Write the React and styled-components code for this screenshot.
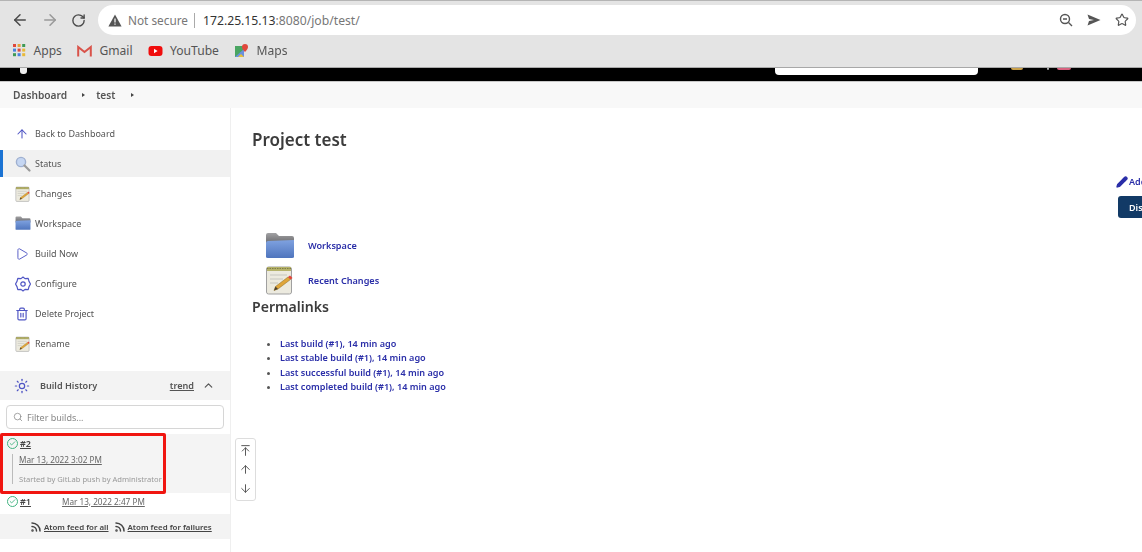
import React from 'react'
import styled, { createGlobalStyle } from 'styled-components'
import {
  ArrowLeft, ArrowRight, RotateCw, Search, Star, ArrowUp, ArrowDown, ArrowUpToLine,
  Play, Trash2, ChevronUp, Rss, Pencil, Check, Sun,
} from 'lucide-react'

const GlobalStyle = createGlobalStyle`
  *, *::before, *::after {
    box-sizing: border-box;
  }
  html, body {
    margin: 0;
    height: 100%;
    overflow: hidden;
    background: #fff;
    font-family: "Noto Sans", "Open Sans", sans-serif;
  }
  #root {
    filter: blur(0.35px);
  }
`

const Page = styled.div`
  position: relative;
  width: 1142px;
  height: 552px;
  overflow: hidden;
  display: flex;
  flex-direction: column;
`

/* browser chrome */
const Toolbar = styled.div`
  height: 35px;
  flex: none;
  display: flex;
  align-items: flex-end;
  padding: 0 6px 0 11px;
  background: #e4e4e4;
  border-top: 1px solid #b4b4b4;
  color: #4a4a4a;
`

const NavIcons = styled.div`
  display: flex;
  align-items: center;
  gap: 12px;
  height: 30px;
  width: 87px;
  flex: none;
`

const AddressBar = styled.div`
  flex: 1;
  height: 30px;
  background: #fff;
  border-radius: 15px;
  display: flex;
  align-items: center;
  padding: 0 7px 0 10px;
  font-size: 12.2px;
  color: #777;
`

const SecurityLabel = styled.span`
  margin-left: 6px;
  font-size: 11.8px;
`

const Divider = styled.span`
  width: 1px;
  height: 15px;
  background: #aaa;
  margin: 0 8px 0 6px;
`

const Host = styled.span`
  color: #333;
`

const UrlTools = styled.div`
  margin-left: auto;
  display: flex;
  align-items: center;
  gap: 14px;
  color: #555;
`

const Bookmarks = styled.div`
  height: 33px;
  flex: none;
  display: flex;
  align-items: center;
  gap: 15px;
  padding: 0 0 1px 13px;
  background: #e4e4e4;
  border-bottom: 1px solid #a8a8a8;
`

const Bookmark = styled.div`
  display: flex;
  align-items: center;
  gap: 7.5px;
  font-size: 12.1px;
  color: #555;
`

/* jenkins header */
const BlackBar = styled.div`
  height: 13px;
  flex: none;
  background: #000;
  display: flex;
  align-items: flex-start;
  padding-left: 20px;
`

const LogoScrap = styled.span`
  width: 7px;
  height: 6px;
  background: #eee;
  border-radius: 0 0 3px 3px;
`

const SearchScrap = styled.span`
  width: 203px;
  height: 7px;
  margin-left: 748px;
  background: #fff;
  border-radius: 0 0 4px 4px;
`

const Dot = styled.span`
  width: ${p => p.$w}px;
  height: 2px;
  margin-left: ${p => p.$gap}px;
  background: ${p => p.$c};
  border-radius: 0 0 3px 3px;
`

const Breadcrumb = styled.div`
  height: 27px;
  flex: none;
  display: flex;
  align-items: center;
  padding-left: 13px;
  background: #f8f8f8;
  border-top: 1px solid #c8c8c8;
  font-size: 10.2px;
  font-weight: 600;
  color: #555;
`

const Caret = styled.span`
  width: 0;
  height: 0;
  margin: 0 ${p => p.$right}px 0 ${p => p.$left}px;
  border-left: 3px solid #444;
  border-top: 2.5px solid transparent;
  border-bottom: 2.5px solid transparent;
`

const Body = styled.div`
  flex: 1;
  display: flex;
  min-height: 0;
`

/* sidebar */
const Sidebar = styled.aside`
  width: 231px;
  flex: none;
  border-right: 1px solid #efefef;
  padding-top: 12px;
`

const Tasks = styled.div`
  display: flex;
  flex-direction: column;
  gap: 3px;
`

const Task = styled.div`
  height: 27px;
  display: flex;
  align-items: center;
  font-size: 9px;
  color: #555;
  padding-left: ${p => (p.$active ? '12px' : '15px')};
  background: ${p => (p.$active ? '#f1f1f1' : 'transparent')};
  border-left: ${p => (p.$active ? '3px solid #1b73d3' : 'none')};
`

const TaskIcon = styled.span`
  width: 20px;
  flex: none;
  display: flex;
  align-items: center;
  color: #4f55c4;
`

const HistoryHead = styled.div`
  height: 29px;
  margin-top: 14px;
  display: flex;
  align-items: center;
  padding: 0 15px 0 14px;
  background: #f3f3f3;
  font-size: 9.1px;
  font-weight: 600;
  color: #555;
`

const HistoryTitle = styled.span`
  margin-left: 10px;
`

const Trend = styled.span`
  margin-left: auto;
  margin-right: 8px;
  text-decoration: underline;
`

const FilterWrap = styled.div`
  padding: 5px 6px 5px;
  background: #fff;
`

const Filter = styled.div`
  height: 24px;
  display: flex;
  align-items: center;
  gap: 4px;
  padding-left: 6px;
  border: 1px solid #d6d6d6;
  border-radius: 4px;
  font-size: 9px;
  color: #888;
`

const BuildOpen = styled.div`
  height: 59px;
  background: #f4f4f4;
  padding: 3px 0 0 7px;
  font-size: 8.2px;
  color: #555;
`

const BuildNumber = styled.div`
  display: flex;
  align-items: center;
  gap: 2px;
  font-size: 9px;
  font-weight: 600;
  color: #444;
  text-decoration: underline;
`

const StatusDot = styled.span`
  width: 11px;
  height: 11px;
  flex: none;
  display: flex;
  align-items: center;
  justify-content: center;
  border: 1.4px solid #3fb27f;
  border-radius: 50%;
  color: #3fb27f;
`

const BuildDetails = styled.div`
  margin: 4px 0 0 5px;
  padding-left: 6px;
  border-left: 1px solid #bbb;
  height: 30px;
  display: flex;
  flex-direction: column;
  justify-content: space-between;
  white-space: nowrap;
`

const BuildDate = styled.span`
  text-decoration: underline;
  color: #666;
`

const Cause = styled.span`
  font-size: 7.6px;
  color: #999;
`

const BuildRow = styled.div`
  height: 21px;
  display: flex;
  align-items: center;
  padding: 0 0 5px 7px;
  font-size: 8.2px;
  color: #666;
`

const RowDate = styled(BuildDate)`
  margin-left: 31px;
`

const Feeds = styled.div`
  height: 25px;
  display: flex;
  align-items: center;
  justify-content: flex-start;
  gap: 5px;
  padding: 1px 0 0 30px;
  background: #f3f3f3;
  font-size: 7.9px;
  font-weight: 600;
  color: #444;
`

const Feed = styled.span`
  display: flex;
  align-items: center;
  gap: 2px;
  span {
    text-decoration: underline;
  }
`

/* scroll buttons beside the sidebar */
const ScrollButtons = styled.div`
  position: absolute;
  left: 235px;
  top: 438px;
  width: 21px;
  height: 63px;
  display: flex;
  flex-direction: column;
  align-items: center;
  justify-content: space-around;
  padding: 2px 0;
  background: #fff;
  border: 1px solid #ddd;
  border-radius: 3px;
  color: #555;
`

const Highlight = styled.div`
  position: absolute;
  left: 0;
  top: 433px;
  width: 166px;
  height: 61px;
  border: 3px solid #f01510;
  border-radius: 2px;
`

/* main column */
const Main = styled.main`
  flex: 1;
  min-width: 0;
  padding: 20px 0 0 21px;
  display: flex;
  flex-direction: column;
`

const Title = styled.h1`
  margin: 0;
  height: 24px;
  line-height: 24px;
  font-size: 17px;
  font-weight: 600;
  color: #3c3c3c;
`

const Actions = styled.div`
  margin: 23px 0 0 864px;
  width: 120px;
  display: flex;
  flex-direction: column;
  align-items: flex-start;
  gap: 8px;
`

const AddLink = styled.span`
  display: flex;
  align-items: center;
  gap: 1px;
  font-size: 9px;
  font-weight: 600;
  white-space: nowrap;
  color: #2a2ea8;
`

const DisableButton = styled.span`
  margin-left: 2px;
  height: 22px;
  padding: 0 8px 0 11px;
  display: flex;
  align-items: center;
  font-size: 9px;
  font-weight: 600;
  white-space: nowrap;
  color: #fff;
  background: #123a66;
  border-radius: 3px;
`

const MainLinks = styled.div`
  margin: 14px 0 0 13px;
  display: flex;
  flex-direction: column;
  gap: 6px;
`

const MainLink = styled.div`
  display: flex;
  align-items: center;
  gap: 13px;
  font-size: 9.1px;
  font-weight: 600;
  color: #2a2ea8;
`

const Subtitle = styled.h2`
  margin: 2px 0 0;
  font-size: 14.1px;
  line-height: 20px;
  font-weight: 600;
  color: #3c3c3c;
`

const Permalinks = styled.ul`
  margin: 20px 0 0;
  padding: 0 0 0 28px;
  font-size: 9.1px;
  line-height: 14.4px;
  font-weight: 600;
  color: #2a2ea8;
  li::marker {
    color: #555;
  }
`

const Folder = ({ size = 16 }) => (
  <svg width={size} height={size * 0.9} viewBox="0 0 30 27">
    <defs>
      <linearGradient id="folderBack" x1="0" y1="0" x2="0" y2="1">
        <stop offset="0" stopColor="#a2a2a4" />
        <stop offset="1" stopColor="#66666a" />
      </linearGradient>
      <linearGradient id="folderFront" x1="0" y1="0" x2="0" y2="1">
        <stop offset="0" stopColor="#7fa2e0" />
        <stop offset="1" stopColor="#4f75bd" />
      </linearGradient>
    </defs>
    <path d="M1 3q0-2 2-2h8l3 3h13q2 0 2 2v6H1z" fill="url(#folderBack)" />
    <path d="M3 9l26-1v17q0 1-2 1H3q-2 0-2-1V11q0-2 2-2z" fill="url(#folderFront)" />
  </svg>
)

const Notepad = ({ size = 16 }) => (
  <svg width={size} height={size} viewBox="0 0 30 30">
    <rect x="1.5" y="2" width="25" height="27" rx="2" fill="#eceadf" stroke="#a0a0a0" />
    <rect x="2" y="2" width="24" height="4" fill="#b5b26a" />
    <path d="M2 3.500h24" stroke="#7f7d45" strokeWidth="1" strokeDasharray="1.500 1" />
    <path d="M5 10h17M5 14h13M5 18h8" stroke="#c6c6c0" strokeWidth="1.2" />
    <path d="M9 25.500l1.500-4L23 12l2.500 2.500L13 24z" fill="#dfa53a" stroke="#8a6a20" strokeWidth=".5" />
    <path d="M23 12l2-1.500 2.500 2.500-2 1.500z" fill="#e2453a" />
    <path d="M9 25.500l1.500-4 2.500 2.500z" fill="#4a4030" />
  </svg>
)

const Magnifier = () => (
  <svg width="16" height="16" viewBox="0 0 16 16">
    <circle cx="6" cy="6" r="4.6" fill="#c5d6f2" stroke="#9fb0d0" strokeWidth="1.4" />
    <path d="M9.500 9.500l5 5" stroke="#9a9a9a" strokeWidth="2.2" strokeLinecap="round" />
  </svg>
)

const HexGear = () => (
  <svg width="16" height="16" viewBox="0 0 16 16" fill="none" stroke="currentColor" strokeWidth="1.2">
    <path d="M8 1l2 1.600 3.200-.2.800 3L15.500 8 14 10.600l-.8 3-3.200-.2L8 15l-2-1.600-3.200.2-.8-3L.5 8 2 5.400l.8-3 3.200.2z" strokeLinejoin="round" />
    <circle cx="8" cy="8" r="2.200" />
  </svg>
)

const NotSecure = () => (
  <svg width="14" height="13" viewBox="0 0 14 13">
    <path d="M7 .5l6.600 12H.4z" fill="#555" />
    <path d="M6.400 4.500h1.200v4H6.400zM6.400 9.500h1.200v1.200H6.400z" fill="#fff" />
  </svg>
)

const SendIcon = () => (
  <svg width="14" height="12" viewBox="0 0 14 12">
    <path d="M.5.5L13.500 6 .5 11.500l1.500-4.600L7 6 2 5.100z" fill="#555" />
  </svg>
)

const ZoomOutIcon = () => (
  <svg width="14" height="14" viewBox="0 0 14 14" fill="none" stroke="#555" strokeWidth="1.4">
    <circle cx="6" cy="6" r="4.500" />
    <path d="M9.500 9.500L13 13M4 6h4" />
  </svg>
)

const AppsIcon = () => {
  const colors = ['#e0483c', '#e8a33a', '#3f9a56', '#4a82e0', '#d94a3e', '#e8b93a', '#3f9a56', '#4a82e0', '#e8b93a']
  return (
    <svg width="13" height="13" viewBox="0 0 13 13">
      {colors.map((c, i) => (
        <rect key={i} x={(i % 3) * 4.6} y={Math.floor(i / 3) * 4.6} width="3" height="3" fill={c} />
      ))}
    </svg>
  )
}

const GmailIcon = () => (
  <svg width="15" height="12" viewBox="0 0 15 12" fill="none">
    <path d="M1.200 11.500V2l6.300 5 6.300-5v9.500" stroke="#d9534a" strokeWidth="2" />
  </svg>
)

const YoutubeIcon = () => (
  <svg width="15" height="12" viewBox="0 0 15 12">
    <rect x=".5" y="1" width="14" height="10" rx="3" fill="#f00d0d" />
    <path d="M6 3.800L9.600 6 6 8.200z" fill="#fff" />
  </svg>
)

const MapsIcon = () => (
  <svg width="15" height="14" viewBox="0 0 15 14">
    <path d="M1 2h9v11H1z" fill="#4aa562" />
    <path d="M1 13l9-8v8z" fill="#6a90e0" />
    <path d="M4 13l3-3 3 3z" fill="#e8c23a" />
    <path d="M11 0a3 3 0 0 1 3 3c0 2-3 5-3 5S8 5 8 3a3 3 0 0 1 3-3z" fill="#e0483c" />
  </svg>
)

const tasks = [
  { label: 'Back to Dashboard', icon: <ArrowUp size={14} strokeWidth={1.8} /> },
  { label: 'Status', icon: <Magnifier />, active: true },
  { label: 'Changes', icon: <Notepad /> },
  { label: 'Workspace', icon: <Folder /> },
  { label: 'Build Now', icon: <Play size={14} strokeWidth={1.6} /> },
  { label: 'Configure', icon: <HexGear /> },
  { label: 'Delete Project', icon: <Trash2 size={14} strokeWidth={2} /> },
  { label: 'Rename', icon: <Notepad /> },
]

const permalinks = [
  'Last build (#1), 14 min ago',
  'Last stable build (#1), 14 min ago',
  'Last successful build (#1), 14 min ago',
  'Last completed build (#1), 14 min ago',
]

export default function App() {
  return (
    <Page>
      <GlobalStyle />
      <Toolbar>
        <NavIcons>
          <ArrowLeft size={18} strokeWidth={2} />
          <ArrowRight size={18} strokeWidth={2} color="#999" />
          <RotateCw size={15} strokeWidth={2.2} />
        </NavIcons>
        <AddressBar>
          <NotSecure />
          <SecurityLabel>Not secure</SecurityLabel>
          <Divider />
          <Host>172.25.15.13</Host>:8080/job/test/
          <UrlTools>
            <ZoomOutIcon />
            <SendIcon />
            <Star size={14} strokeWidth={2} color="#555" />
          </UrlTools>
        </AddressBar>
      </Toolbar>
      <Bookmarks>
        <Bookmark><AppsIcon />Apps</Bookmark>
        <Bookmark><GmailIcon />Gmail</Bookmark>
        <Bookmark><YoutubeIcon />YouTube</Bookmark>
        <Bookmark><MapsIcon />Maps</Bookmark>
      </Bookmarks>
      <BlackBar>
        <LogoScrap />
        <SearchScrap />
        <Dot $w={12} $gap={33} $c="#c9a04a" />
        <Dot $w={2} $gap={24} $c="#aaa" />
        <Dot $w={14} $gap={8} $c="#d8617f" />
      </BlackBar>
      <Breadcrumb>
        Dashboard
        <Caret $left={15} $right={11} />
        test
        <Caret $left={16} $right={0} />
      </Breadcrumb>
      <Body>
        <Sidebar>
          <Tasks>
            {tasks.map(t => (
              <Task key={t.label} $active={t.active}>
                <TaskIcon>{t.icon}</TaskIcon>
                {t.label}
              </Task>
            ))}
          </Tasks>
          <HistoryHead>
            <Sun size={16} strokeWidth={1.8} color="#4f55c4" />
            <HistoryTitle>Build History</HistoryTitle>
            <Trend>trend</Trend>
            <ChevronUp size={13} strokeWidth={2.2} />
          </HistoryHead>
          <FilterWrap>
            <Filter>
              <Search size={10} strokeWidth={1.8} />
              Filter builds...
            </Filter>
          </FilterWrap>
          <BuildOpen>
            <BuildNumber>
              <StatusDot><Check size={7} strokeWidth={3} /></StatusDot>
              #2
            </BuildNumber>
            <BuildDetails>
              <BuildDate>Mar 13, 2022 3:02 PM</BuildDate>
              <Cause>Started by GitLab push by Administrator</Cause>
            </BuildDetails>
          </BuildOpen>
          <BuildRow>
            <BuildNumber>
              <StatusDot><Check size={7} strokeWidth={3} /></StatusDot>
              #1
            </BuildNumber>
            <RowDate>Mar 13, 2022 2:47 PM</RowDate>
          </BuildRow>
          <Feeds>
            <Feed><Rss size={12} strokeWidth={3} /><span>Atom feed for all</span></Feed>
            <Feed><Rss size={12} strokeWidth={3} /><span>Atom feed for failures</span></Feed>
          </Feeds>
        </Sidebar>
        <Main>
          <Title>Project test</Title>
          <Actions>
            <AddLink><Pencil size={12} strokeWidth={2.6} fill="#2a2ea8" />Add description</AddLink>
            <DisableButton>Disable Project</DisableButton>
          </Actions>
          <MainLinks>
            <MainLink><Folder size={30} />Workspace</MainLink>
            <MainLink><Notepad size={30} />Recent Changes</MainLink>
          </MainLinks>
          <Subtitle>Permalinks</Subtitle>
          <Permalinks>
            {permalinks.map(p => <li key={p}>{p}</li>)}
          </Permalinks>
        </Main>
      </Body>
      <ScrollButtons>
        <ArrowUpToLine size={13} strokeWidth={1.8} />
        <ArrowUp size={13} strokeWidth={1.8} />
        <ArrowDown size={13} strokeWidth={1.8} />
      </ScrollButtons>
      <Highlight />
    </Page>
  )
}
